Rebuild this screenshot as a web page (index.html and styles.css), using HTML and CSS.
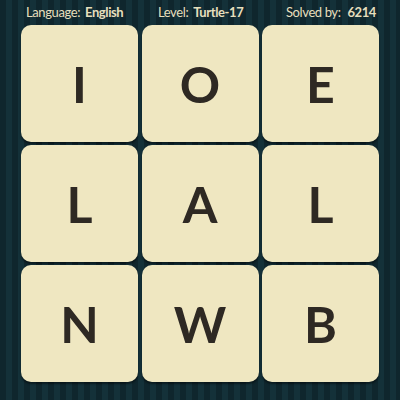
FILE: index.html
```html
<!DOCTYPE html>
<html>
<head>
<meta charset="utf-8">
<link rel="stylesheet" href="styles.css">
</head>
<body>
<div class="page">
  <div class="header">
    <span class="item lang">Language: <b>English</b></span>
    <span class="item level">Level: <b>Turtle-17</b></span>
    <span class="item solved">Solved by: <b>6214</b></span>
  </div>
  <div class="grid">
    <div class="tile">I</div>
    <div class="tile">O</div>
    <div class="tile">E</div>
    <div class="tile">L</div>
    <div class="tile">A</div>
    <div class="tile">L</div>
    <div class="tile">N</div>
    <div class="tile">W</div>
    <div class="tile">B</div>
  </div>
</div>
</body>
</html>
```

FILE: styles.css
```css
html, body {
  margin: 0;
  padding: 0;
}
body {
  width: 400px;
  height: 400px;
  overflow: hidden;
  background-color: #112b32;
  background-image: repeating-linear-gradient(90deg, #0f262d 0px, #0f262d 6px, #143139 6px, #143139 12px);
  font-family: Lato, "Open Sans", sans-serif;
}
.page {
  width: 400px;
  height: 400px;
}
.header {
  height: 25px;
  display: flex;
  align-items: center;
  color: #e6dfbd;
  font-size: 13px;
  letter-spacing: -0.4px;
  line-height: 1;
  padding-left: 26px;
  box-sizing: border-box;
  white-space: nowrap;
}
.header b {
  font-weight: 700;
  margin-left: 2px;
}
.lang {
  width: 132px;
}
.level {
  width: 128px;
}
.solved b {
  margin-left: 4px;
}
.grid {
  display: grid;
  grid-template-columns: repeat(3, 117px);
  grid-auto-rows: 117px;
  column-gap: 3.5px;
  row-gap: 3px;
  padding-left: 21px;
}
.tile {
  background: #efe7c1;
  border-radius: 10px;
  box-shadow: 0 2px 2px rgba(0, 0, 0, 0.45);
  display: flex;
  align-items: center;
  justify-content: center;
  color: #2e2923;
  font-size: 50px;
  font-weight: 700;
  line-height: 1;
}
```
